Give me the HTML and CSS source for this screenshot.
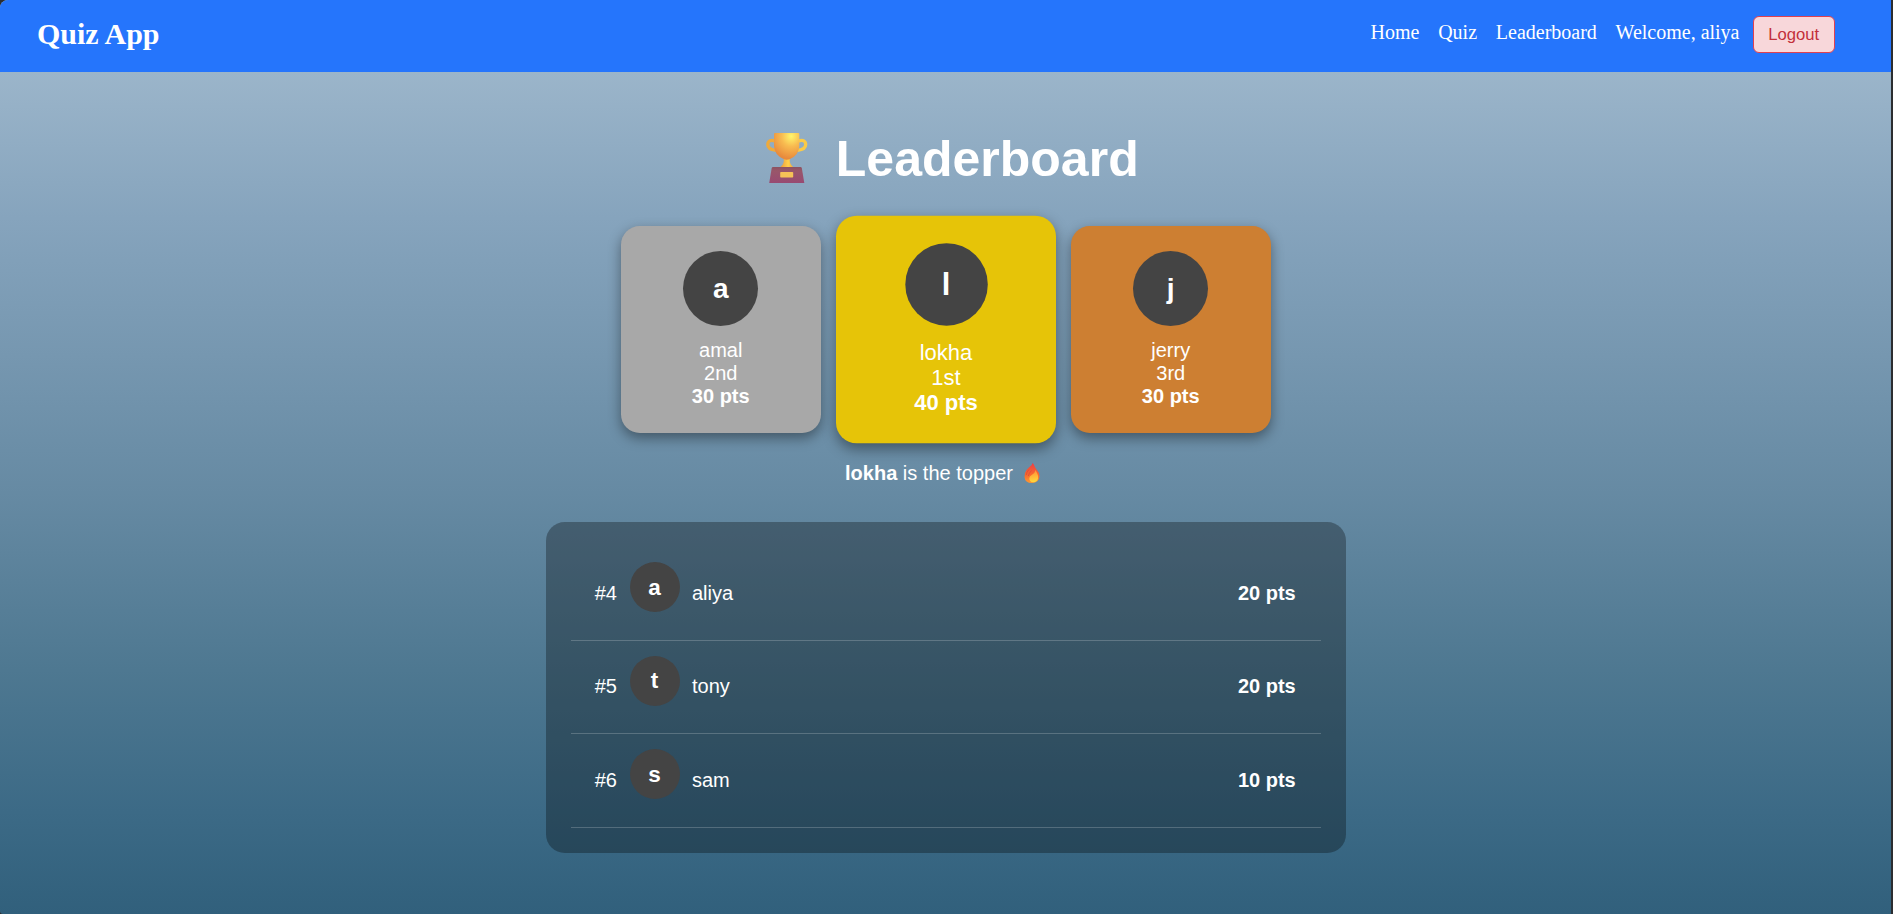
FILE: index.html
```html
<!DOCTYPE html>
<html lang="en">
<head>
<meta charset="utf-8">
<title>Quiz App - Leaderboard</title>
<link rel="stylesheet" href="styles.css">
</head>
<body>
<div class="page">
  <nav class="navbar">
    <div class="brand">Quiz App</div>
    <div class="links">
      <a>Home</a>
      <a>Quiz</a>
      <a>Leaderboard</a>
      <span class="welcome">Welcome, aliya</span>
      <button class="logout">Logout</button>
    </div>
  </nav>
  <main class="content">
    <h1 class="title">
      <svg class="trophy" viewBox="0 0 42 50">
        <defs>
          <radialGradient id="cup" cx="0.68" cy="0.12" r="0.85">
            <stop offset="0" stop-color="#fff66c"/>
            <stop offset="0.45" stop-color="#f8bb50"/>
            <stop offset="1" stop-color="#e88a3c"/>
          </radialGradient>
          <linearGradient id="stem" x1="0" x2="1">
            <stop offset="0" stop-color="#e9963a"/>
            <stop offset="0.6" stop-color="#ffd04a"/>
            <stop offset="1" stop-color="#f0a63c"/>
          </linearGradient>
          <linearGradient id="plinth" x1="0" y1="0" x2="0" y2="1">
            <stop offset="0" stop-color="#8b5260"/>
            <stop offset="0.25" stop-color="#99566a"/>
            <stop offset="1" stop-color="#984a72"/>
          </linearGradient>
        </defs>
        <path d="M9 8C4.500 6.300 1.800 8.200 1.800 11.500C1.800 15 5 16.800 10 17.300" fill="none" stroke="#eeaa3c" stroke-width="3.300"/>
        <path d="M32.500 8C37 6.300 39.700 8.200 39.700 11.500C39.700 15 36.500 16.800 31.500 17.300" fill="none" stroke="#fbcb46" stroke-width="3.300"/>
        <path d="M17.800 24h6v4q0 3 3.800 6.500H14q3.800-3.500 3.800-6.500z" fill="url(#stem)"/>
        <path d="M8 1Q8 0 9 0H32.300Q33.300 0 33.300 1V13Q33 22 24 26Q20.700 27.300 17.500 26Q8.500 22 8 13z" fill="url(#cup)"/>
        <path d="M7 34h27.500q1 0 1.300 1L38.300 50H3.200L5.700 35q.3-1 1.300-1z" fill="url(#plinth)"/>
        <rect x="14.200" y="39" width="13" height="5.500" rx="0.800" fill="#f6c257"/>
      </svg>
      <span>Leaderboard</span>
    </h1>
    <section class="podium">
      <article class="card silver"><div class="avatar">a</div><div>amal</div><div>2nd</div><strong>30 pts</strong></article>
      <article class="card gold"><div class="avatar">l</div><div>lokha</div><div>1st</div><strong>40 pts</strong></article>
      <article class="card bronze"><div class="avatar">j</div><div>jerry</div><div>3rd</div><strong>30 pts</strong></article>
    </section>
    <p class="topper"><span><strong>lokha</strong> is the topper</span>
      <svg class="fire" viewBox="0 0 16 20">
        <defs>
          <linearGradient id="flame" x1="0.5" y1="0" x2="0.5" y2="1">
            <stop offset="0" stop-color="#ec3f45"/>
            <stop offset="0.6" stop-color="#f8692e"/>
            <stop offset="1" stop-color="#ff9a32"/>
          </linearGradient>
          <linearGradient id="core" x1="0.5" y1="0" x2="0.6" y2="1">
            <stop offset="0" stop-color="#ff8d37"/>
            <stop offset="1" stop-color="#ffdc3b"/>
          </linearGradient>
        </defs>
        <path d="M8.500 0C10.500 1.500 10.500 4.500 12.500 6.500Q15.600 9.500 15.500 13.500Q14.800 20 8 20Q1 20 .5 14Q.2 10 2.500 7Q4.500 4.500 6 3.500Q8 2 8.500 0z" fill="url(#flame)"/>
        <path d="M11.500 7C12.700 9.500 14.700 12 14 15.500Q13 19.300 9.500 19.300Q5 19 5.300 15Q5.600 13 8 11.700Q11 10 11.500 7z" fill="url(#core)"/>
        <path d="M2.300 12Q2.500 9 5 6.500M4.300 13Q5 10 7.500 7.500" fill="none" stroke="#d94a3a" stroke-width="0.700"/>
      </svg>
    </p>
    <section class="ranking">
      <div class="row"><span>#4</span><div class="avatar small">a</div><span>aliya</span><strong>20 pts</strong></div>
      <div class="row"><span>#5</span><div class="avatar small">t</div><span>tony</span><strong>20 pts</strong></div>
      <div class="row"><span>#6</span><div class="avatar small">s</div><span>sam</span><strong>10 pts</strong></div>
    </section>
  </main>
</div>
</body>
</html>
```
FILE: styles.css
```css
* { box-sizing: border-box; }

body {
  margin: 0;
  background: #2b2d30;
  font-family: "Liberation Sans", Arial, sans-serif;
  font-size: 20px;
  line-height: 23px;
  color: #fff;
  overflow: hidden;
}

.page {
  width: 1891px;
  height: 914px;
  border-radius: 8px 0 0 3px;
  overflow: hidden;
  background: linear-gradient(180deg, #9bb5ca 72px, #86a4bd 218px, #668aa3 493px, #4e7891 670px, #3c6a86 812px, #31607c 914px);
}

.navbar {
  display: flex;
  justify-content: space-between;
  align-items: flex-start;
  height: 72px;
  padding: 16px 56px 0 37px;
  background: #2575fc;
  font-family: "Liberation Serif", "Times New Roman", serif;
}

.brand {
  font-size: 30px;
  font-weight: bold;
  line-height: 36px;
}

.links {
  display: flex;
  align-items: flex-start;
  font-size: 20px;
  line-height: 33px;
}

.links a { margin-right: 18.750px; }

.welcome { margin-right: 13px; }

.logout {
  width: 82.500px;
  height: 37px;
  padding: 0;
  border: 1px solid #e04050;
  border-radius: 6px;
  background: #f8d7da;
  color: #c3303b;
  font-family: "Liberation Sans", Arial, sans-serif;
  font-size: 16.670px;
  line-height: 32px;
}

.content {
  display: flex;
  flex-direction: column;
  align-items: center;
  padding: 58px 0 0 0.500px;
}

.title {
  display: flex;
  align-items: center;
  gap: 28px;
  height: 58px;
  margin: 0 0 38px;
  padding-left: 13px;
  font-size: 50px;
  line-height: 58px;
}

.trophy {
  width: 42px;
  height: 50px;
  margin-bottom: 2px;
}

.podium {
  display: flex;
  gap: 25px;
}

.card {
  display: flex;
  flex-direction: column;
  align-items: center;
  width: 200px;
  height: 207px;
  padding: 25px;
  border-radius: 18.750px;
  box-shadow: 0 5px 12.500px rgba(0, 0, 0, 0.4);
}

.silver { background: #a8a8a8; }
.gold { background: #e6c408; transform: scale(1.1); }
.bronze { background: #cd7f32; }

.avatar {
  display: flex;
  align-items: center;
  justify-content: center;
  flex: none;
  width: 75px;
  height: 75px;
  margin-bottom: 12.500px;
  border-radius: 50%;
  background: #444;
  font-size: 28px;
  font-weight: bold;
}

.small {
  width: 50px;
  height: 50px;
  font-size: 22.500px;
}

.topper {
  display: flex;
  align-items: center;
  gap: 11.500px;
  height: 23px;
  margin: 29px 0 37px;
  padding-right: 6px;
}

.fire {
  width: 16px;
  height: 20px;
  margin-bottom: 1px;
}

.ranking {
  width: 800px;
  height: 331px;
  padding: 25px;
  border-radius: 18.750px;
  background: rgba(0, 0, 0, 0.3);
}

.row {
  display: flex;
  align-items: center;
  gap: 12.500px;
  height: 93.670px;
  padding: 15px 25px 15px 24px;
  border-bottom: 1px solid rgba(255, 255, 255, 0.2);
}

.row strong { margin-left: auto; }
```
